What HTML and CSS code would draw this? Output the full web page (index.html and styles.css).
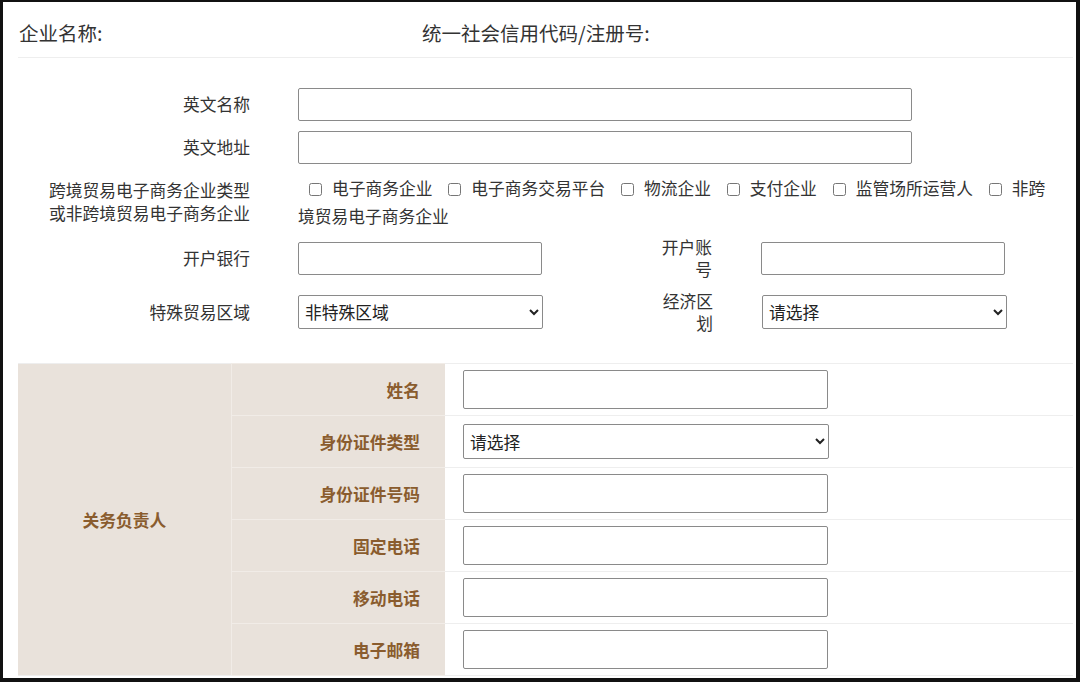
FILE: index.html
```html
<!DOCTYPE html>
<html>
<head>
    <meta charset="utf-8">
    <link rel="stylesheet" href="styles.css">
</head>
<body>
<div class="frame">
    <div class="head">
        <span class="headName">企业名称:</span>
        <span>统一社会信用代码/注册号:</span>
    </div>

    <div class="baseForm">
        <div class="row">
            <label class="label">英文名称</label>
            <input class="wideInput" type="text">
        </div>
        <div class="row">
            <label class="label">英文地址</label>
            <input class="wideInput" type="text">
        </div>
        <div class="row typeRow">
            <label class="label">跨境贸易电子商务企业类型<br>或非跨境贸易电子商务企业</label>
            <div class="options">
                <label class="opt"><input type="checkbox">电子商务企业</label>
                <label class="opt"><input type="checkbox">电子商务交易平台</label>
                <label class="opt"><input type="checkbox">物流企业</label>
                <label class="opt"><input type="checkbox">支付企业</label>
                <label class="opt"><input type="checkbox">监管场所运营人</label>
                <label class="opt"><input type="checkbox">非跨境贸易电子商务企业</label>
            </div>
        </div>
        <div class="row">
            <label class="label">开户银行</label>
            <input class="halfInput" type="text">
            <label class="label2">开户账号</label>
            <input class="halfInput" type="text">
        </div>
        <div class="row">
            <label class="label">特殊贸易区域</label>
            <select class="halfSelect">
                <option>非特殊区域</option>
            </select>
            <label class="label2">经济区划</label>
            <select class="halfSelect">
                <option>请选择</option>
            </select>
        </div>
    </div>

    <table class="contactTable">
        <tr>
            <td class="groupCell" rowspan="6">关务负责人</td>
            <td class="fieldLabel">姓名</td>
            <td class="fieldCell"><input class="tableInput" type="text"></td>
        </tr>
        <tr>
            <td class="fieldLabel">身份证件类型</td>
            <td class="fieldCell">
                <select class="tableSelect">
                    <option>请选择</option>
                </select>
            </td>
        </tr>
        <tr>
            <td class="fieldLabel">身份证件号码</td>
            <td class="fieldCell"><input class="tableInput" type="text"></td>
        </tr>
        <tr>
            <td class="fieldLabel">固定电话</td>
            <td class="fieldCell"><input class="tableInput" type="text"></td>
        </tr>
        <tr>
            <td class="fieldLabel">移动电话</td>
            <td class="fieldCell"><input class="tableInput" type="text"></td>
        </tr>
        <tr>
            <td class="fieldLabel">电子邮箱</td>
            <td class="fieldCell"><input class="tableInput" type="text"></td>
        </tr>
    </table>
</div>
</body>
</html>
```

FILE: styles.css
```css
html, body
{
    margin: 0;
    padding: 0;
    background: #fff;
}
body
{
    font-family: "Microsoft YaHei", "Noto Sans CJK SC", "Noto Sans", sans-serif;
    font-size: 16.75px;
    color: #333;
}
.frame
{
    box-sizing: border-box;
    width: 1080px;
    height: 682px;
    overflow: hidden;
    border-style: solid;
    border-color: #111;
    border-width: 2px 4px 4px 3px;
    padding: 0 3px 0 15px;
}
.head
{
    display: flex;
    padding: 18px 0 11px 1px;
    line-height: 26px;
    font-size: 19.5px;
    color: #333;
    border-bottom: 1px solid #eee;
}
.headName
{
    width: 403px;
}
.baseForm
{
    padding: 30px 0 29px 1px;
}
.row
{
    display: flex;
    align-items: center;
    margin-bottom: 10px;
}
.row:last-child
{
    margin-bottom: 0;
}
.typeRow
{
    margin-bottom: 6px;
}
.label
{
    width: 231px;
    margin-right: 48px;
    text-align: right;
    line-height: 23px;
}
.label2
{
    box-sizing: border-box;
    width: 170px;
    padding-left: 110px;
    margin-right: 49px;
    text-align: right;
    line-height: 22px;
}
input[type=text], select
{
    box-sizing: border-box;
    border: 1px solid #8a8a8a;
    border-radius: 2px;
    background: #fff;
    font-family: inherit;
    font-size: 16.75px;
    color: #222;
    margin: 0;
}
.wideInput
{
    width: 614px;
    height: 33px;
}
.halfInput
{
    width: 244px;
    height: 33px;
}
.halfSelect
{
    width: 245px;
    height: 34px;
    padding-left: 2px;
}
.options
{
    width: 757px;
    line-height: 28px;
    text-indent: 11px;
}
.opt
{
    margin-right: 12px;
}
.opt input
{
    width: 13px;
    height: 13px;
    margin: 0 10px 0 0;
    vertical-align: -1px;
}
.contactTable
{
    width: 100%;
    border-collapse: collapse;
}
.contactTable td
{
    height: 51px;
    padding: 0;
    border-top: 1px solid #eeeeee;
    border-bottom: 1px solid #eeeeee;
}
.groupCell
{
    width: 213px;
    background: #e9e2db;
    text-align: center;
    font-weight: bold;
    color: #8a5c2e;
    border-right: 1px solid #f1ece7;
}
.contactTable td.fieldLabel
{
    width: 188px;
    padding-right: 25px;
    background: #e9e2db;
    text-align: right;
    font-weight: bold;
    color: #8a5c2e;
    border-color: #f1ece7;
}
.fieldCell
{
    padding-left: 18px !important;
}
.tableInput
{
    width: 365px;
    height: 39px;
}
.tableSelect
{
    width: 366px;
    height: 35px;
    padding-left: 2px;
}
```
